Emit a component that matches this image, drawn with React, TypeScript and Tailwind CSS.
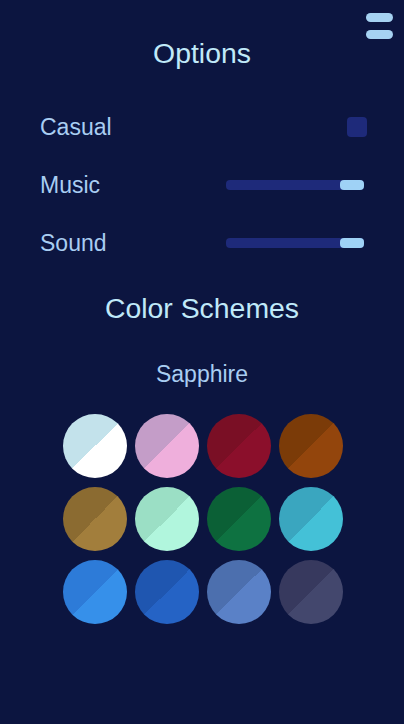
const schemes = [
  { name: 'Frost', dark: '#c3e2eb', light: '#ffffff' },
  { name: 'Blossom', dark: '#c49dc8', light: '#efafdc' },
  { name: 'Ruby', dark: '#7a0f25', light: '#8b0f2b' },
  { name: 'Amber', dark: '#7b3b08', light: '#93450c' },
  { name: 'Bronze', dark: '#8b6b31', light: '#a27e3c' },
  { name: 'Mint', dark: '#9bdfc5', light: '#b1f6dd' },
  { name: 'Emerald', dark: '#0b6036', light: '#0e7241' },
  { name: 'Lagoon', dark: '#3aa6bf', light: '#44c1d7' },
  { name: 'Sky', dark: '#2d7bd8', light: '#3690ea' },
  { name: 'Sapphire', dark: '#1f56b0', light: '#2563c5' },
  { name: 'Denim', dark: '#4c6fae', light: '#5a81c7' },
  { name: 'Slate', dark: '#37395e', light: '#43476d' },
];

function Slider({ label }: { label: string }) {
  return (
    <div className="flex h-10 items-center justify-between">
      <span className="text-[23px] text-[#a9cdf2]">{label}</span>
      <div className="flex h-[10px] w-[138px] justify-end rounded-[4px] bg-[#1e2a7a]">
        <div className="h-full w-[24px] rounded-[4px] bg-[#9fd2f6]" />
      </div>
    </div>
  );
}

export default function App() {
  const selected = 'Sapphire';

  return (
    <div
      className="relative min-h-screen bg-[#0c1540]"
      style={{ fontFamily: '"Liberation Sans", Arial, sans-serif' }}
    >
      {/* menu button */}
      <button className="absolute right-[11px] top-[13px] flex flex-col gap-[8px]">
        <span className="block h-[9px] w-[27px] rounded-full bg-[#a6d2f2]" />
        <span className="block h-[9px] w-[27px] rounded-full bg-[#a6d2f2]" />
      </button>

      <h1 className="pt-[37px] text-center text-[28.4px] leading-[32px] text-[#c0e9f9]">Options</h1>

      <div className="mt-[38px] flex flex-col gap-[18px] px-10">
        <div className="flex h-10 items-center justify-between">
          <span className="text-[23px] text-[#a9cdf2]">Casual</span>
          <div className="mr-[-3px] h-[20px] w-[20px] rounded-[4px] bg-[#1e2a7a]" />
        </div>
        <Slider label="Music" />
        <Slider label="Sound" />
      </div>

      <h2 className="mt-[29px] text-center text-[28.4px] leading-[32px] text-[#c0e9f9]">Color Schemes</h2>

      <p className="mt-[36px] text-center text-[23px] leading-[28px] text-[#a9cdf2]">{selected}</p>

      <div className="mx-auto mt-[26px] grid w-[281px] grid-cols-4 gap-x-[8.33px] gap-y-[9px] pl-[1px]">
        {schemes.map((s) => (
          <div
            key={s.name}
            title={s.name}
            className="h-[64px] w-[64px] rounded-full"
            style={{ background: `linear-gradient(135deg, ${s.dark} 50%, ${s.light} 50%)` }}
          />
        ))}
      </div>
    </div>
  );
}
